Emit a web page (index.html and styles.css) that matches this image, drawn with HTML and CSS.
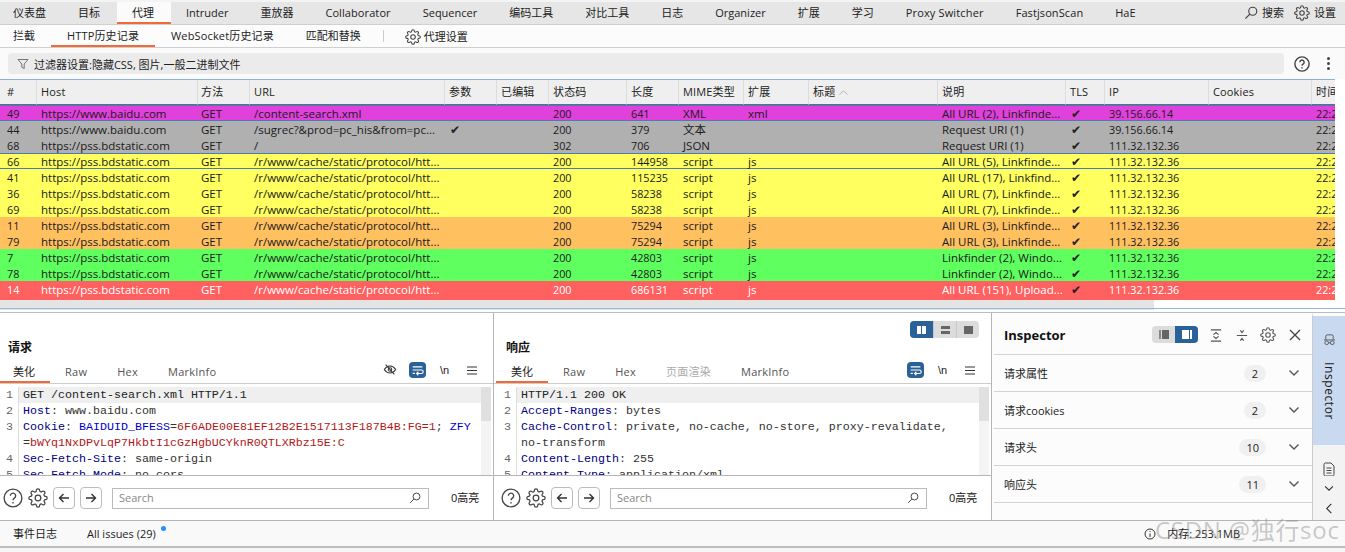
FILE: index.html
```html
<!DOCTYPE html>
<html lang="zh">
<head>
<meta charset="utf-8">
<title>Burp Suite</title>
<link rel="stylesheet" href="styles.css">
</head>
<body>
<svg class="sprite" xmlns="http://www.w3.org/2000/svg">
  <symbol id="gear" viewBox="0 0 24 24"><circle cx="12" cy="12" r="3.4"/><path d="M19.4 15a1.65 1.65 0 0 0 .33 1.82l.06.06a2 2 0 0 1 0 2.83 2 2 0 0 1-2.83 0l-.06-.06a1.65 1.65 0 0 0-1.82-.33 1.65 1.65 0 0 0-1 1.51V21a2 2 0 0 1-2 2 2 2 0 0 1-2-2v-.09A1.65 1.65 0 0 0 9 19.4a1.65 1.65 0 0 0-1.82.33l-.06.06a2 2 0 0 1-2.83 0 2 2 0 0 1 0-2.83l.06-.06a1.65 1.65 0 0 0 .33-1.82 1.65 1.65 0 0 0-1.51-1H3a2 2 0 0 1-2-2 2 2 0 0 1 2-2h.09A1.65 1.65 0 0 0 4.6 9a1.65 1.65 0 0 0-.33-1.82l-.06-.06a2 2 0 0 1 0-2.83 2 2 0 0 1 2.83 0l.06.06a1.65 1.65 0 0 0 1.82.33H9a1.65 1.65 0 0 0 1-1.51V3a2 2 0 0 1 2-2 2 2 0 0 1 2 2v.09a1.65 1.65 0 0 0 1 1.51 1.65 1.65 0 0 0 1.82-.33l.06-.06a2 2 0 0 1 2.83 0 2 2 0 0 1 0 2.83l-.06.06a1.65 1.65 0 0 0-.33 1.82V9a1.65 1.65 0 0 0 1.51 1H21a2 2 0 0 1 2 2 2 2 0 0 1-2 2h-.09a1.65 1.65 0 0 0-1.51 1z"/></symbol>
  <symbol id="search" viewBox="0 0 16 16"><circle cx="10" cy="6" r="4.6"/><path d="M6.6 9.4 1.5 14.5"/></symbol>
  <symbol id="help" viewBox="0 0 18 18"><circle cx="9" cy="9" r="8"/><path d="M6.6 7a2.4 2.4 0 1 1 3.6 2.1c-.8.5-1.2 1-1.2 2"/><path d="M9 12.6v1.4"/></symbol>
  <symbol id="wrap" viewBox="0 0 17 16"><path d="M3 4.500h11M3 8h10a2 2 0 0 1 0 4H8M3 11.800h2.500M9.500 10l-2 2 2 2"/></symbol>
  <symbol id="menu" viewBox="0 0 10 9"><path d="M0 1h10M0 4.500h10M0 8h10"/></symbol>
  <symbol id="chev" viewBox="0 0 12 8"><path d="M1.500 1.500 6 6l4.500-4.500"/></symbol>
</svg>

<nav class="maintabs">
  <span class="mt first">仪表盘</span><span class="mt">目标</span><span class="mt on">代理</span><span class="mt">Intruder</span><span class="mt">重放器</span><span class="mt ls1">Collaborator</span><span class="mt">Sequencer</span><span class="mt">编码工具</span><span class="mt">对比工具</span><span class="mt">日志</span><span class="mt">Organizer</span><span class="mt">扩展</span><span class="mt">学习</span><span class="mt ls2">Proxy Switcher</span><span class="mt ls1">FastjsonScan</span><span class="mt">HaE</span>
  <span class="mt-tools">
    <span class="tool"><svg class="ic i14"><use href="#search"/></svg>搜索</span>
    <span class="tool"><svg class="ic i16"><use href="#gear"/></svg>设置</span>
  </span>
</nav>

<nav class="subtabs">
  <span class="st first">拦截</span><span class="st on ls2">HTTP历史记录</span><span class="st ls2">WebSocket历史记录</span><span class="st">匹配和替换</span>
  <span class="st-sep"></span>
  <span class="st-set"><svg class="ic i16"><use href="#gear"/></svg>代理设置</span>
</nav>

<div class="filterbar">
  <div class="filter">
    <svg class="funnel" viewBox="0 0 12 12"><path d="M1 1.500h10L7.200 6v4.500L4.800 9.300V6z"/></svg>
    <span class="filter-text">过滤器设置:隐藏CSS, 图片,一般二进制文件</span>
  </div>
  <svg class="ic i16 fhelp"><use href="#help"/></svg>
  <span class="kebab"><i></i><i></i><i></i></span>
</div>

<section class="history">
  <table class="grid">
    <colgroup><col class="c1"><col class="c2"><col class="c3"><col class="c4"><col class="c5"><col class="c6"><col class="c7"><col class="c8"><col class="c9"><col class="c10"><col class="c11"><col class="c12"><col class="c13"><col class="c14"><col class="c15"><col class="c16"></colgroup>
    <thead><tr><th>#</th><th>Host</th><th>方法</th><th>URL</th><th>参数</th><th>已编辑</th><th>状态码</th><th>长度</th><th>MIME类型</th><th>扩展</th><th>标题 <svg class="sort" viewBox="0 0 12 8"><path d="M1.500 6.500 6 2l4.500 4.500"/></svg></th><th>说明</th><th>TLS</th><th>IP</th><th>Cookies</th><th>时间</th></tr></thead>
    <tbody>
      <tr class="magenta lined"><td>49</td><td>https://www.baidu.com</td><td>GET</td><td>/content-search.xml</td><td></td><td></td><td>200</td><td>641</td><td>XML</td><td>xml</td><td></td><td>All URL (2), Linkfinde...</td><td class="ck">✔</td><td>39.156.66.14</td><td></td><td>22:26:4</td></tr>
      <tr class="grey"><td>44</td><td>https://www.baidu.com</td><td>GET</td><td>/sugrec?&amp;prod=pc_his&amp;from=pc...</td><td class="ck">✔</td><td></td><td>200</td><td>379</td><td>文本</td><td></td><td></td><td>Request URI (1)</td><td class="ck">✔</td><td>39.156.66.14</td><td></td><td>22:26:4</td></tr>
      <tr class="grey"><td>68</td><td>https://pss.bdstatic.com</td><td>GET</td><td>/</td><td></td><td></td><td>302</td><td>706</td><td>JSON</td><td></td><td></td><td>Request URI (1)</td><td class="ck">✔</td><td>111.32.132.36</td><td></td><td>22:26:4</td></tr>
      <tr class="yellow lined"><td>66</td><td>https://pss.bdstatic.com</td><td>GET</td><td>/r/www/cache/static/protocol/htt...</td><td></td><td></td><td>200</td><td>144958</td><td>script</td><td>js</td><td></td><td>All URL (5), Linkfinde...</td><td class="ck">✔</td><td>111.32.132.36</td><td></td><td>22:26:4</td></tr>
      <tr class="yellow"><td>41</td><td>https://pss.bdstatic.com</td><td>GET</td><td>/r/www/cache/static/protocol/htt...</td><td></td><td></td><td>200</td><td>115235</td><td>script</td><td>js</td><td></td><td>All URL (17), Linkfind...</td><td class="ck">✔</td><td>111.32.132.36</td><td></td><td>22:26:4</td></tr>
      <tr class="yellow"><td>36</td><td>https://pss.bdstatic.com</td><td>GET</td><td>/r/www/cache/static/protocol/htt...</td><td></td><td></td><td>200</td><td>58238</td><td>script</td><td>js</td><td></td><td>All URL (7), Linkfinde...</td><td class="ck">✔</td><td>111.32.132.36</td><td></td><td>22:26:4</td></tr>
      <tr class="yellow"><td>69</td><td>https://pss.bdstatic.com</td><td>GET</td><td>/r/www/cache/static/protocol/htt...</td><td></td><td></td><td>200</td><td>58238</td><td>script</td><td>js</td><td></td><td>All URL (7), Linkfinde...</td><td class="ck">✔</td><td>111.32.132.36</td><td></td><td>22:26:4</td></tr>
      <tr class="orange"><td>11</td><td>https://pss.bdstatic.com</td><td>GET</td><td>/r/www/cache/static/protocol/htt...</td><td></td><td></td><td>200</td><td>75294</td><td>script</td><td>js</td><td></td><td>All URL (3), Linkfinde...</td><td class="ck">✔</td><td>111.32.132.36</td><td></td><td>22:26:4</td></tr>
      <tr class="orange"><td>79</td><td>https://pss.bdstatic.com</td><td>GET</td><td>/r/www/cache/static/protocol/htt...</td><td></td><td></td><td>200</td><td>75294</td><td>script</td><td>js</td><td></td><td>All URL (3), Linkfinde...</td><td class="ck">✔</td><td>111.32.132.36</td><td></td><td>22:26:4</td></tr>
      <tr class="green"><td>7</td><td>https://pss.bdstatic.com</td><td>GET</td><td>/r/www/cache/static/protocol/htt...</td><td></td><td></td><td>200</td><td>42803</td><td>script</td><td>js</td><td></td><td>Linkfinder (2), Windo...</td><td class="ck">✔</td><td>111.32.132.36</td><td></td><td>22:26:4</td></tr>
      <tr class="green"><td>78</td><td>https://pss.bdstatic.com</td><td>GET</td><td>/r/www/cache/static/protocol/htt...</td><td></td><td></td><td>200</td><td>42803</td><td>script</td><td>js</td><td></td><td>Linkfinder (2), Windo...</td><td class="ck">✔</td><td>111.32.132.36</td><td></td><td>22:26:4</td></tr>
      <tr class="red last"><td>14</td><td>https://pss.bdstatic.com</td><td>GET</td><td>/r/www/cache/static/protocol/htt...</td><td></td><td></td><td>200</td><td>686131</td><td>script</td><td>js</td><td></td><td>All URL (151), Upload...</td><td class="ck">✔</td><td>111.32.132.36</td><td></td><td>22:26:4</td></tr>
    </tbody>
  </table>
  <div class="hscroll"><div class="hthumb"></div></div>
</section>

<main class="workspace">
  <section class="pane req">
    <div class="pane-title"><h2>请求</h2></div>
    <div class="pane-tabs">
      <span class="pt on">美化</span><span class="pt">Raw</span><span class="pt">Hex</span><span class="pt">MarkInfo</span>
      <span class="pane-tools">
        <svg class="eye" viewBox="0 0 16 14"><path d="M1.500 7C3.500 4 5.500 3 8 3s4.500 1 6.500 4c-2 3-4 4-6.500 4S3.500 10 1.500 7z"/><circle cx="8" cy="7" r="2"/><path d="M3 1.500 13 12.500"/></svg>
        <span class="wrapbtn"><svg class="ic i-w"><use href="#wrap"/></svg></span>
        <span class="nl">\n</span>
        <svg class="ic i-m"><use href="#menu"/></svg>
      </span>
    </div>
    <div class="code">
      <div class="code-body">
        <div class="ln cur"><b>1</b><p>GET /content-search.xml HTTP/1.1</p></div>
        <div class="ln"><b>2</b><p><span class="k">Host</span>: www.baidu.com</p></div>
        <div class="ln"><b>3</b><p><span class="k">Cookie</span>: <span class="cn">BAIDUID_BFESS</span>=<span class="cv">6F6ADE00E81EF12B2E1517113F187B4B:FG=1</span>; <span class="cn">ZFY</span><br>=<span class="cv">bWYq1NxDPvLqP7HkbtI1cGzHgbUCYknR0QTLXRbz15E:C</span></p></div>
        <div class="ln"><b>4</b><p><span class="k">Sec-Fetch-Site</span>: same-origin</p></div>
        <div class="ln"><b>5</b><p><span class="k">Sec-Fetch-Mode</span>: no-cors</p></div>
      </div>
      <div class="vscroll"><i></i></div>
    </div>
    <div class="pane-foot">
      <svg class="ic i18"><use href="#help"/></svg>
      <svg class="ic i19"><use href="#gear"/></svg>
      <span class="nav-btn"><svg viewBox="0 0 12 12"><path d="M11 6H1.500M5.500 2 1.500 6l4 4"/></svg></span>
      <span class="nav-btn"><svg viewBox="0 0 12 12"><path d="M1 6h9.500M6.500 2l4 4-4 4"/></svg></span>
      <span class="searchbox"><span>Search</span><svg class="ic i12"><use href="#search"/></svg></span>
      <span class="hits">0高亮</span>
    </div>
  </section>

  <section class="pane res">
    <div class="pane-title">
      <h2>响应</h2>
      <span class="seg">
        <span class="sg on"><i class="bars-v"></i></span><span class="sg"><i class="bars-h"></i></span><span class="sg"><i class="bar-full"></i></span>
      </span>
    </div>
    <div class="pane-tabs">
      <span class="pt on">美化</span><span class="pt">Raw</span><span class="pt">Hex</span><span class="pt off">页面渲染</span><span class="pt">MarkInfo</span>
      <span class="pane-tools">
        <span class="wrapbtn"><svg class="ic i-w"><use href="#wrap"/></svg></span>
        <span class="nl">\n</span>
        <svg class="ic i-m"><use href="#menu"/></svg>
      </span>
    </div>
    <div class="code">
      <div class="code-body">
        <div class="ln cur"><b>1</b><p>HTTP/1.1 200 OK</p></div>
        <div class="ln"><b>2</b><p><span class="k">Accept-Ranges</span>: bytes</p></div>
        <div class="ln"><b>3</b><p><span class="k">Cache-Control</span>: private, no-cache, no-store, proxy-revalidate,<br>no-transform</p></div>
        <div class="ln"><b>4</b><p><span class="k">Content-Length</span>: 255</p></div>
        <div class="ln"><b>5</b><p><span class="k">Content-Type</span>: application/xml</p></div>
      </div>
      <div class="vscroll"><i></i></div>
    </div>
    <div class="pane-foot">
      <svg class="ic i18"><use href="#help"/></svg>
      <svg class="ic i19"><use href="#gear"/></svg>
      <span class="nav-btn"><svg viewBox="0 0 12 12"><path d="M11 6H1.500M5.500 2 1.500 6l4 4"/></svg></span>
      <span class="nav-btn"><svg viewBox="0 0 12 12"><path d="M1 6h9.500M6.500 2l4 4-4 4"/></svg></span>
      <span class="searchbox"><span>Search</span><svg class="ic i12"><use href="#search"/></svg></span>
      <span class="hits">0高亮</span>
    </div>
  </section>

  <section class="inspector">
    <header class="ins-head">
      <h2>Inspector</h2>
      <span class="seg small">
        <span class="sg"><i class="side-l"></i></span><span class="sg on"><i class="side-r"></i></span>
      </span>
      <svg class="ins-ic" viewBox="0 0 14 16"><path d="M1 1.500h12M1 14.500h12M4 7l3-2.500L10 7M4 9l3 2.500L10 9"/></svg>
      <svg class="ins-ic" viewBox="0 0 14 16"><path d="M1 8h12M5 2l2 2.500L9 2M5 14l2-2.500L9 14"/></svg>
      <svg class="ic i16"><use href="#gear"/></svg>
      <svg class="ins-ic x" viewBox="0 0 12 12"><path d="M1 1l10 10M11 1 1 11"/></svg>
    </header>
    <div class="ins-row"><span>请求属性</span><em>2</em><svg class="ic i-c"><use href="#chev"/></svg></div>
    <div class="ins-row"><span>请求cookies</span><em>2</em><svg class="ic i-c"><use href="#chev"/></svg></div>
    <div class="ins-row"><span>请求头</span><em>10</em><svg class="ic i-c"><use href="#chev"/></svg></div>
    <div class="ins-row"><span>响应头</span><em>11</em><svg class="ic i-c"><use href="#chev"/></svg></div>
  </section>

  <aside class="rail">
    <div class="rail-on">
      <svg class="glasses" viewBox="0 0 14 14"><path d="M3 7V3.500a1.500 1.500 0 0 1 1.500-1.500h5A1.500 1.500 0 0 1 11 3.500V7M1 7.500h12"/><circle cx="4" cy="10.500" r="2"/><circle cx="10" cy="10.500" r="2"/><path d="M6 10.500h2"/></svg>
      <span class="rail-text">Inspector</span>
    </div>
    <svg class="doc" viewBox="0 0 12 14"><path d="M1 2.500A1.500 1.500 0 0 1 2.500 1H8l3 3v8.500a1.500 1.500 0 0 1-1.500 1.500h-7A1.500 1.500 0 0 1 1 12.500zM3.500 6H8.500M3.500 8.500H8.500M3.500 11H8.500"/></svg>
    <svg class="ic i-r"><use href="#chev"/></svg>
    <svg class="rail-left" viewBox="0 0 8 12"><path d="M6.500 1 1.500 6l5 5"/></svg>
  </aside>
</main>

<footer class="status">
  <span class="sb first">事件日志</span>
  <span class="sb issues">All issues (29)<i class="dot"></i></span>
  <span class="mem"><svg class="ic i12b" viewBox="0 0 12 12"><circle cx="6" cy="6" r="5"/><path d="M6 5.500V9M6 3v1"/></svg>内存: 253.1MB</span>
  <span class="watermark">CSDN @独行soc</span>
</footer>
</body>
</html>
```
FILE: styles.css
```css
* { box-sizing: border-box; }
html, body { margin: 0; padding: 0; }
body {
  width: 1345px; height: 552px; overflow: hidden; background: #f6f6f6; color: #222;
  font: 11px/16px "Open Sans", "Noto Sans CJK SC", sans-serif;
}
.sprite { display: none; }
h2 { margin: 0; font-weight: 700; }
p { margin: 0; }
.ic { fill: none; stroke: #444; stroke-width: 1.300; flex: none; }
.i14 { width: 14px; height: 14px; }
.i16 { width: 16px; height: 16px; stroke-width: 1.600; }
.i18 { width: 20px; height: 20px; stroke-width: 1.200; }
.i19 { width: 20px; height: 20px; stroke-width: 1.500; }
.i12 { width: 12px; height: 12px; }
.i-w { width: 15px; height: 14px; stroke: #fff; }
.i-m { width: 10px; height: 9px; stroke: #333; stroke-width: 1.200; }
.i-c { width: 12px; height: 8px; stroke: #555; stroke-width: 1.400; }
.i-r { width: 12px; height: 7px; stroke: #333; }
.ls1 { letter-spacing: .09px; }
.ls2 { letter-spacing: .15px; }

/* top tabs */
.maintabs {
  display: flex; height: 25px; background: #e6e6e6;
  border-top: 2px solid #f4f4f4; border-bottom: 1px solid #cfcfcf; align-items: stretch;
}
.mt { padding: 0 16px; line-height: 21px; color: #222; white-space: nowrap; }
.mt.first { padding-left: 13px; }
.mt.on { background: #fbfbfb; border-bottom: 2px solid #f26a35; padding: 0 17px 0 15px; margin: 0 -1px 0 1px; }
.mt-tools { margin-left: auto; display: flex; align-items: center; gap: 10px; padding-right: 9px; }
.tool { display: flex; align-items: center; gap: 4px; }

.subtabs {
  display: flex; height: 23px; align-items: flex-start; background: #fcfcfc;
  border-bottom: 1px solid #cfcfcf;
}
.st { padding: 0 16px; line-height: 21px; white-space: nowrap; height: 22px; }
.st.first { padding-left: 13px; }
.st.on { border-bottom: 2px solid #f26a35; }
.st-sep { width: 1px; height: 12px; margin: 5px 21px 0 6px; background: #ccc; }
.st-set { display: flex; align-items: center; gap: 3px; height: 22px; padding-top: 1px; }

.filterbar { display: flex; align-items: center; height: 31px; background: #fafafa; padding: 0 8px; }
.filter {
  width: 1276px; height: 21px; background: #ebebeb; border-radius: 4px;
  display: flex; align-items: center; gap: 5px; padding-left: 9px;
}
.filter-text { padding-top: 2px; }
.funnel { width: 12px; height: 12px; fill: none; stroke: #666; stroke-width: .9; }
.fhelp { margin-left: 10px; }
.kebab { display: flex; flex-direction: column; gap: 2px; margin-left: 17px; }
.kebab i { width: 3px; height: 3px; background: #444; border-radius: 50%; }

/* table */
.history { height: 234px; position: relative; background: #fff; }
.grid {
  width: 1335px; table-layout: fixed; border-collapse: separate; border-spacing: 0;
  border-top: 1px solid #8fb0d4;
}
.c1 { width: 37px; } .c2 { width: 161px; } .c3 { width: 52px; } .c4 { width: 195px; }
.c5 { width: 52px; } .c6 { width: 52px; } .c7 { width: 78px; } .c8 { width: 52px; }
.c9 { width: 65px; } .c10 { width: 65px; } .c11 { width: 129px; } .c12 { width: 128px; }
.c13 { width: 39px; } .c14 { width: 104px; } .c15 { width: 103px; } .c16 { width: 23px; }
th {
  height: 25px; padding: 0 0 0 4px; font-weight: 400; text-align: left; background: #efefef;
  border-right: 1px solid #dcdcdc; border-bottom: 1px solid #5d6f86; letter-spacing: .15px;
  white-space: nowrap; overflow: hidden; vertical-align: middle;
}
th:nth-child(3), td:nth-child(3) { padding-left: 3px; }
th:first-child, td:first-child { padding-left: 7px; }
th:last-child { border-right: 0; }
.sort { width: 11px; height: 7px; fill: none; stroke: #aaa; stroke-width: 1; }
td {
  height: 16px; padding: 2px 0 0 4px; white-space: nowrap; overflow: hidden; font-size: 11.5px; line-height: 14px; color: #1a1a1a;
}
td:nth-child(1), td:nth-child(7), td:nth-child(8), td:nth-child(14), td:nth-child(16) { font-size: 10.8px; }
td.ck { font-size: 12px; font-family: "DejaVu Sans", sans-serif; padding-left: 5px; color: #222; }
.magenta td { background: #e040dc; }
.grey td { background: #b0b0b0; }
.yellow td { background: #ffff60; }
.orange td { background: #ffc060; }
.green td { background: #60ff60; }
.red td { background: #ff6060; color: #fff; }
.red td.ck { color: #222; }
.last td { height: 19px; padding-bottom: 3px; }
.lined td { box-shadow: inset 0 1px 0 #4f79b5, inset 0 -1px 0 #4f79b5; }
.hscroll { height: 10px; background: #fff; width: 1336px; }
.hthumb { width: 1154px; height: 10px; background: #e4e4e4; }
.history::after {
  content: ""; position: absolute; left: 0; right: 0; bottom: 0; height: 3px;
  border-top: 1px solid #8fb8e4; border-bottom: 1px solid #bcbcbc;
}

/* workspace */
.workspace { display: flex; height: 207px; background: #fff; }
.pane { display: flex; flex-direction: column; border-right: 1px solid #b8b4b4; }
.pane.req { width: 494px; }
.pane.res { width: 498px; }
.pane-title { display: flex; justify-content: space-between; height: 48px; padding: 0 12px 0 8px; }
.res .pane-title { padding-left: 12px; }
.pane-title h2 { font-size: 12px; line-height: 20px; margin-top: 25px; color: #111; }
.seg { display: flex; height: 17px; margin-top: 8px; border-radius: 4px; overflow: hidden; background: #dcdcdc; }
.sg { width: 23px; display: flex; align-items: center; justify-content: center; border-left: 1px solid #c8c8c8; }
.sg:first-child { border-left: 0; }
.sg.on { background: #2a6199; border-left: 0; }
.bars-v { width: 9px; height: 8px; background: linear-gradient(90deg, #fff 0 4px, transparent 4px 5px, #fff 5px); }
.bars-h { width: 9px; height: 8px; background: linear-gradient(180deg, #666 0 3px, transparent 3px 5px, #666 5px); }
.bar-full { width: 9px; height: 8px; background: #666; }
.pane-tabs { display: flex; height: 23px; border-bottom: 1px solid #ccc; }
.res .pane-tabs { padding-left: 2px; }
.pt { padding: 0 15px; line-height: 22px; color: #555; white-space: nowrap; height: 22px; letter-spacing: .25px; }
.pt.on { color: #222; border-bottom: 2px solid #f26a35; letter-spacing: 0; }
.req .pt.on { padding: 0 15px 0 13px; }
.pt.off { color: #aaa; }
.pane-tools { margin-left: auto; display: flex; align-items: flex-start; padding-right: 16px; }
.eye { width: 14px; height: 13px; margin: 2px 12px 0 0; fill: none; stroke: #333; stroke-width: 1.200; }
.wrapbtn { width: 17px; height: 16px; background: #2a6199; border-radius: 4px; display: flex; align-items: center; justify-content: center; margin-top: 1px; }
.nl { width: 9px; margin: -1px 18px 0 14px; font-size: 11px; color: #222; font-family: "Liberation Sans", sans-serif; line-height: 20px; }
.pane-tools .i-m { margin-top: 5px; }

.code { display: flex; height: 92px; padding-top: 3px; border-bottom: 1px solid #b8b4b4; overflow: hidden; }
.code-body { width: 481px; overflow: hidden; font: 11.67px/16px "Liberation Mono", "Courier New", monospace; color: #333; }
.ln { display: flex; }
.ln b { width: 19px; flex: none; text-align: right; padding-right: 5px; font-weight: 400; color: #666; border-right: 1px solid #ddd; }
.ln p { padding-left: 4px; white-space: nowrap; flex: 1; }
.ln.cur p { background: #efefef; color: #222; }
.k { color: #000080; }
.cn { color: #0000c8; }
.cv { color: #b01818; }
.vscroll { width: 10px; background: #f4f4f4; }
.vscroll i { display: block; height: 34px; background: #e0e0e0; }
.res .code-body { width: 485px; }
.res .ln b { width: 23px; }

.pane-foot { flex: 1; display: flex; align-items: center; padding: 0 0 0 3px; }
.res .pane-foot { padding-left: 7px; }
.pane-foot .i19 { margin-left: 5px; }
.nav-btn {
  width: 22px; height: 22px; border: 1px solid #bbb; border-radius: 4px; margin-left: 5px;
  display: flex; align-items: center; justify-content: center;
}
.nav-btn svg { width: 12px; height: 12px; fill: none; stroke: #333; stroke-width: 1.400; }
.searchbox {
  width: 317px; height: 21px; margin-left: 10px; border: 1px solid #bbb; display: flex; align-items: center;
  justify-content: space-between; padding: 0 7px 0 6px; color: #888; background: #fff;
}
.hits { margin-left: 22px; color: #111; }

/* inspector */
.inspector { width: 320px; background: #fcfcfc; padding-left: 2px; }
.ins-head { display: flex; align-items: center; height: 42px; padding: 0 0 0 10px; border-bottom: 1px solid #d4d4d4; }
.ins-head h2 { font-size: 13px; color: #111; width: 148px; padding-top: 3px; }
.seg.small { margin-top: 2px; width: 46px; }
.small .sg { border: 0; width: 23px; }
.side-l, .side-r { width: 10px; height: 9px; }
.side-l { background: linear-gradient(90deg, #888 0 2px, transparent 2px 3px, #666 3px); }
.side-r { background: linear-gradient(90deg, #fff 0 7px, transparent 7px 8px, #fff 8px); }
.ins-ic { width: 12px; height: 15px; margin: 3px 0 0 12px; fill: none; stroke: #555; stroke-width: 1.300; }
.ins-ic + .ins-ic { margin-left: 14px; }
.ins-head .i16 { margin: 3px 0 0 12px; stroke: #555; }
.ins-ic.x { width: 12px; height: 12px; margin-left: 13px; stroke: #444; stroke-width: 1.300; }
.ins-row { display: flex; align-items: center; height: 37px; padding: 0 12px 0 10px; border-bottom: 1px solid #d4d4d4; }
.ins-row span { flex: 1; padding-top: 2px; }
.ins-row em { font-style: normal; min-width: 22px; padding: 0 7px; height: 17px; line-height: 17px; text-align: center; background: #f0f0f0; border-radius: 9px; margin-right: 22px; }
.rail { width: 33px; background: #f3f3f3; display: flex; flex-direction: column; align-items: center; border-left: 1px solid #ccc; border-top: 3px solid #fcfcfc; }
.rail-on { width: 33px; height: 129px; background: #c9d9f0; display: flex; flex-direction: column; align-items: center; padding-top: 17px; flex: none; }
.glasses { width: 13px; height: 13px; fill: none; stroke: #555; stroke-width: 1; flex: none; }
.rail-text { writing-mode: vertical-rl; font-size: 12px; margin-top: 16px; letter-spacing: .6px; color: #222; }
.doc { width: 12px; height: 14px; margin-top: 17px; fill: none; stroke: #444; stroke-width: 1; flex: none; }
.rail .i-r { margin-top: 9px; }
.rail-left { width: 8px; height: 11px; margin-top: 11px; fill: none; stroke: #333; stroke-width: 1.200; flex: none; }

/* status */
.status {
  display: flex; align-items: center; height: 28px; padding-top: 1px; background: #f9f9f9;
  border-top: 1px solid #b8b4b4; border-bottom: 2px solid #bdbdbd; position: relative;
}
.sb { white-space: nowrap; }
.sb.first { margin-left: 13px; }
.issues { margin-left: 30px; position: relative; }
.dot { position: absolute; top: 0; right: -10px; width: 5px; height: 5px; border-radius: 50%; background: #1e90ff; }
.mem { margin-left: auto; margin-right: 105px; display: flex; align-items: center; gap: 11px; }
.i12b { width: 12px; height: 12px; stroke: #333; stroke-width: 1; }
.watermark {
  position: absolute; left: 1155px; top: -3px; font: 24px/24px "Open Sans", "Noto Sans CJK SC", sans-serif;
  letter-spacing: .7px; color: rgba(130,130,130,.42); white-space: nowrap;
}
```
